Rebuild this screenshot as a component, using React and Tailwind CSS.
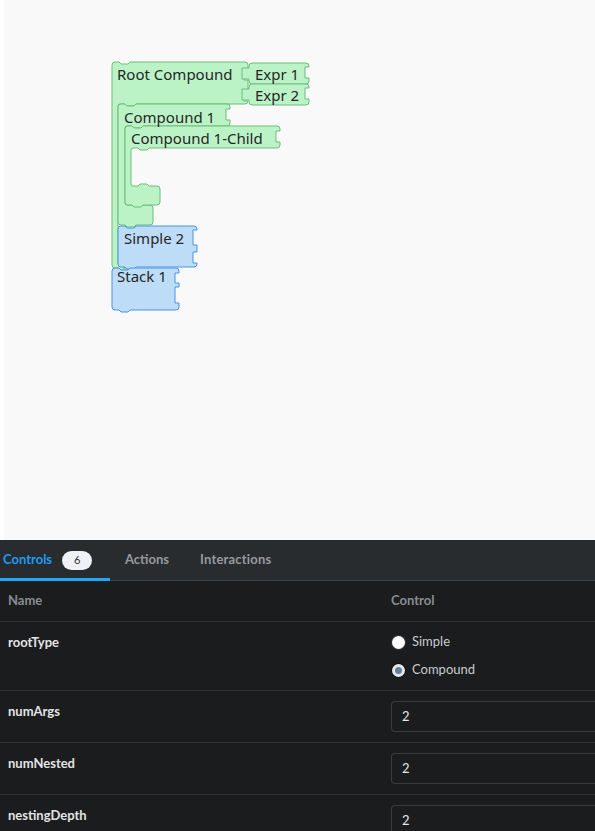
const GREEN = { fill: "#bbf3c6", stroke: "#6dbd7b" };
const BLUE = { fill: "#bddcf8", stroke: "#4b95e0" };

// top dip / bottom bump for statement connections
const topDip = (x) => `H${x + 7} l2,2 H${x + 16} l2,-2`;
const bottomBump = (x) => `H${x + 18} l-2,2 H${x + 9} l-2,-2`;

const rightNotches = (xr, y, notches) =>
  notches.map(([a, b]) => `V${y + a} H${xr - 4} V${y + b} H${xr}`).join(" ");

function simplePath(x, y, w, h, notches) {
  return `M${x + 3},${y} ${topDip(x)} H${x + w - 3} Q${x + w},${y} ${x + w},${y + 3} ${rightNotches(
    x + w,
    y,
    notches
  )} V${y + h - 3} Q${x + w},${y + h} ${x + w - 3},${y + h} ${bottomBump(x)} H${x + 3} Q${x},${
    y + h
  } ${x},${y + h - 3} V${y + 3} Q${x},${y} ${x + 3},${y} Z`;
}

function cPath(x, y, w, h, hh, aw, bw, bh, notches) {
  const ix = x + aw;
  const by = y + h - bh;
  return `M${x + 3},${y} ${topDip(x)} H${x + w - 3} Q${x + w},${y} ${x + w},${y + 3} ${rightNotches(
    x + w,
    y,
    notches
  )} V${y + hh - 3} Q${x + w},${y + hh} ${x + w - 3},${y + hh} H${ix + 18} l-2,2 H${ix + 9} l-2,-2 H${
    ix + 2
  } Q${ix},${y + hh} ${ix},${y + hh + 2} V${by - 2} Q${ix},${by} ${ix + 2},${by} H${ix + 7} l2,-2 H${
    ix + 16
  } l2,2 H${x + bw - 3} Q${x + bw},${by} ${x + bw},${by + 3} V${y + h - 3} Q${x + bw},${y + h} ${
    x + bw - 3
  },${y + h} ${bottomBump(x)} H${x + 3} Q${x},${y + h} ${x},${y + h - 3} V${y + 3} Q${x},${y} ${x + 3},${y} Z`;
}

function exprPath(x, y, w, h, tab, notch) {
  return `M${x + 3},${y} H${x + w - 3} Q${x + w},${y} ${x + w},${y + 3} ${rightNotches(
    x + w,
    y,
    [notch]
  )} V${y + h - 3} Q${x + w},${y + h} ${x + w - 3},${y + h} H${x + 3} Q${x},${y + h} ${x},${
    y + h - 3
  } V${y + tab[1]} H${x - 7} V${y + tab[0]} H${x} V${y + 3} Q${x},${y} ${x + 3},${y} Z`;
}

const blocks = [
  { d: cPath(112, 62, 136, 206, 42, 6, 14, 3, [[7, 18], [28, 39]]), c: GREEN },
  { d: exprPath(249, 63, 60, 21, [5, 16], [4, 15]), c: GREEN },
  { d: exprPath(249, 84, 60, 21, [5, 16], [4, 15]), c: GREEN },
  { d: cPath(118, 104, 112, 121, 22, 7, 35, 20, [[5, 16]]), c: GREEN },
  { d: cPath(125, 126, 155, 79, 22, 6, 35, 19, [[5, 16]]), c: GREEN },
  { d: simplePath(118, 226, 79, 41, [[4, 19], [26, 37]]), c: BLUE },
  { d: simplePath(112, 268, 67, 42, [[5, 15], [19, 35]]), c: BLUE },
];

const labels = [
  { t: "Root Compound", x: 117, y: 80 },
  { t: "Expr 1", x: 255, y: 80 },
  { t: "Expr 2", x: 255, y: 101 },
  { t: "Compound 1", x: 124, y: 123 },
  { t: "Compound 1-Child", x: 131, y: 144 },
  { t: "Simple 2", x: 124, y: 244 },
  { t: "Stack 1", x: 117, y: 282 },
];

function Workspace() {
  return (
    <div className="flex h-[540px] shrink-0">
      <div className="w-[4px] bg-white" />
      <div className="flex-1 bg-[#f9f9f9]">
        <svg width="591" height="540" viewBox="4 0 591 540">
          {blocks.map((b, i) => (
            <path key={i} d={b.d} fill={b.c.fill} stroke={b.c.stroke} strokeWidth="1" strokeLinejoin="round" />
          ))}
          {labels.map((l) => (
            <text
              key={l.t}
              x={l.x}
              y={l.y}
              fontFamily="'Noto Sans', sans-serif"
              fontSize="15"
              fill="#262626"
            >
              {l.t}
            </text>
          ))}
        </svg>
      </div>
    </div>
  );
}

function Radio({ checked, label }) {
  return (
    <div className="flex items-center h-[28px] gap-[7px]">
      {checked ? (
        <span className="w-[13px] h-[13px] rounded-full border-[3px] border-[#e4e9ef] bg-[#6b7e95] shadow-[0_0_0_1px_#111]" />
      ) : (
        <span className="w-[13px] h-[13px] rounded-full bg-white shadow-[0_0_0_1px_#333]" />
      )}
      <span className="text-[13px] text-[#c9cbcd]">{label}</span>
    </div>
  );
}

function NumRow({ name, value }) {
  return (
    <div className="flex border-b border-[#303235] py-[10px]">
      <div className="w-[391px] pl-2 h-[20px] leading-[20px] text-[13px] font-bold text-[#e2e3e4]">{name}</div>
      <div className="flex-1 h-[31px] rounded-l-[4px] border border-r-0 border-[#393b3f] flex items-center pl-[10px] text-[13px] text-[#e6e6e6]">
        {value}
      </div>
    </div>
  );
}

export default function App() {
  return (
    <div className="w-[595px] h-[831px] overflow-hidden flex flex-col font-['Lato',sans-serif]">
      <Workspace />
      <div className="flex-1 bg-[#1b1c1e] flex flex-col">
        <div className="h-[41px] bg-[#292c2f] border-b border-[#3c3f43] flex items-stretch">
          <div className="relative flex items-center gap-[10px] pl-[3px] w-[110px]">
            <span className="text-[13px] font-bold text-[#1e9bf4]">Controls</span>
            <span className="h-[19px] px-[12px] rounded-full bg-[#eef2f7] text-[11px] text-[#333] flex items-center">6</span>
            <div className="absolute left-0 right-0 bottom-[-1px] h-[3px] bg-[#1ea7fd]" />
          </div>
          <div className="flex items-center pl-[15px] text-[13px] font-bold text-[#969a9f]">Actions</div>
          <div className="flex items-center pl-[31px] text-[13px] font-bold text-[#969a9f] tracking-[0.2px]">Interactions</div>
        </div>
        <div className="h-[41px] border-b border-[#303235] flex items-center text-[13px] font-bold text-[#8a8d91]">
          <div className="w-[391px] pl-2">Name</div>
          <div>Control</div>
        </div>
        <div className="flex border-b border-[#303235] py-[10px]">
          <div className="w-[391px] pl-2 h-[20px] leading-[20px] text-[13px] font-bold text-[#e2e3e4]">rootType</div>
          <div className="flex flex-col -mt-[4px] -mb-[4px] pl-[1px]">
            <Radio label="Simple" />
            <Radio checked label="Compound" />
          </div>
        </div>
        <NumRow name="numArgs" value="2" />
        <NumRow name="numNested" value="2" />
        <NumRow name="nestingDepth" value="2" />
      </div>
    </div>
  );
}
